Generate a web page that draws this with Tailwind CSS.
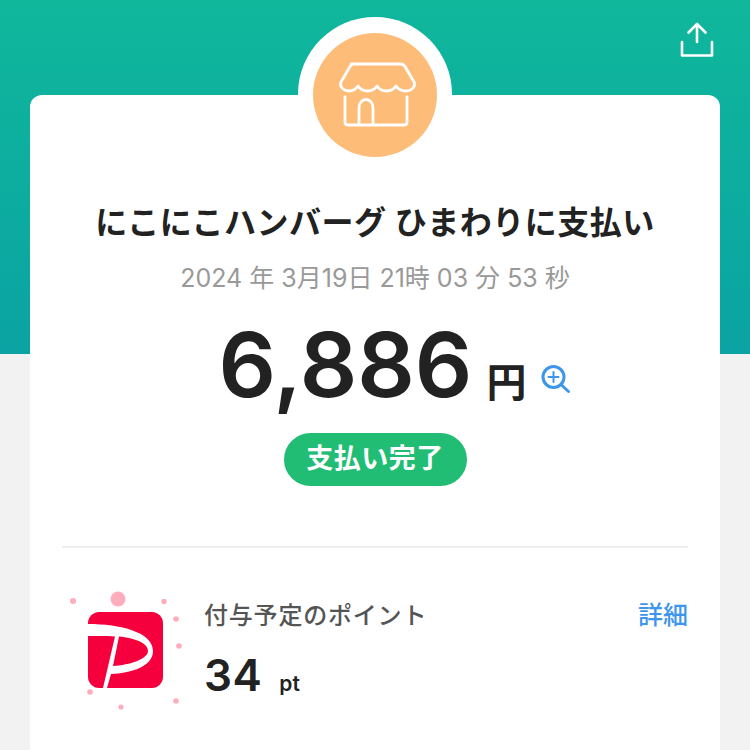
<!doctype html>
<html lang="ja"><head><meta charset="utf-8">
<script src="https://cdn.jsdelivr.net/npm/@tailwindcss/browser@4"></script>
</head>
<body class="w-[750px] h-[750px] overflow-hidden bg-[#f2f2f2] font-['Inter','Noto_Sans_CJK_JP',sans-serif]">
<div class="relative w-[750px] h-[750px] overflow-hidden">
  <div class="h-[354px] bg-gradient-to-b from-[#10b79b] to-[#0ba3a3] flex justify-end items-start pt-[20px] pr-[34px]">
    <svg class="w-[38px] h-[38px]" viewBox="678 20 38 38" fill="none" stroke="#fff" stroke-width="2.6" stroke-linecap="round" stroke-linejoin="round"><path d="M697 42V24M688.500 32.500 697 24l8.500 8.500M682 42v13.500h30V42"/></svg>
  </div>
  <div class="absolute left-[298px] top-[17px] w-[154px] h-[154px] rounded-full bg-white"></div>
  <div class="absolute left-[30px] top-[95px] w-[690px] h-[700px] bg-white rounded-[12px] flex flex-col items-center">
    <div class="absolute left-[283px] top-[-62px] w-[124px] h-[124px] rounded-full bg-[#fdbd78] flex items-center justify-center">
      <svg class="w-[92px] h-[70px]" viewBox="329 60 92 70" fill="none" stroke="#fff" stroke-width="2.800" stroke-linecap="round" stroke-linejoin="round"><path d="M351 64h50c2 0 3 1 4 2.500l9 15.500c2 5-3 9-8 9-4 0-8-2-10-5-2 3-5.500 5-9.500 5s-7.500-2-9.500-5c-2 3-5.500 5-9.500 5s-7.500-2-9.500-5c-2 3-5 5-9 5-5 0-10-4-8-9l9-15.500c1-1.500 2-2.500 4-2.500Z"/><path d="M345 97v25q0 3 3 3h56q3 0 3-3V97M359 125v-17c0-5 3-8.500 7-8.500s7 3.500 7 8.500v17"/></svg>
    </div>
    <h1 class="mt-[108px] text-[32px] leading-[40px] font-bold text-[#222] tracking-[0.5px] whitespace-nowrap">にこにこハンバーグ ひまわりに支払い</h1>
    <p class="mt-[18px] text-[25px] leading-[34px] text-[#999] whitespace-nowrap">2024 年 3月19日 21時 03 分 53 秒</p>
    <div class="mt-[24px] flex items-baseline h-[92px] ml-[40px]">
      <span class="text-[90px] leading-[92px] font-semibold text-[#222]">6,886</span>
      <span class="ml-[14px] text-[40px] font-semibold text-[#222]">円</span>
      <svg class="ml-[15px] w-[30px] h-[30px] self-center mt-[30px]" viewBox="0 0 30 30" fill="none" stroke="#3e95ec" stroke-width="3" stroke-linecap="round"><circle cx="12.500" cy="12" r="10.500"/><path d="M20.500 20l7 6.500"/><path stroke-width="2" d="M7.500 12h10M12.500 7v10"/></svg>
    </div>
    <div class="mt-[22px] w-[183px] h-[53px] rounded-full bg-[#21bd75] text-white text-[27px] font-bold flex items-center justify-center tracking-[0.5px]">支払い完了</div>
    <div class="mt-[60px] w-[626px] border-t-2 border-[#eee]"></div>
    <div class="mt-[41px] w-[626px] flex items-start">
      <svg class="w-[130px] h-[125px] shrink-0 ml-[-2px]" viewBox="60 590 130 125">
        <g fill="#ffacbc"><circle cx="118" cy="600" r="7.500"/><circle cx="73" cy="602" r="3"/><circle cx="164" cy="602.500" r="2.700"/><circle cx="176" cy="620" r="2.800"/><circle cx="179" cy="647" r="2.800"/><circle cx="90" cy="693" r="2.800"/><circle cx="121" cy="708" r="2.600"/><circle cx="176" cy="702" r="2.800"/></g>
        <path fill="#f5003c" d="M99 613h53c6 0 11 5 11 11v54c0 6-5 11-11 11H99c-6 0-11-5-11-11v-54c0-6 5-11 11-11Z"/>
        <path fill="#fff" fill-rule="evenodd" d="M88 625C120 625 153 633 153 652 153 668 130 674 111 675L107 689H103L115 637.500C105 637 95 637 88 637ZM119 637.500C135 639 148 644 148 652 148 660 130 666 113 667Z"/>
      </svg>
      <div class="ml-[14px] flex-1 min-w-0" >
        <div class="flex justify-between items-start mt-[9px]">
          <div>
            <p class="text-[24px] leading-[34px] font-medium text-[#555] tracking-[0.8px] mt-[1px]">付与予定のポイント</p>
          </div>
          <a class="text-[25px] leading-[34px] font-medium text-[#3e95ec]">詳細</a>
        </div>
        <p class="mt-[16px] flex items-baseline font-semibold text-[#222]"><span class="text-[44px] leading-[52px] tracking-[0.5px]">34</span><span class="ml-[17px] text-[21px]">pt</span></p>
      </div>
    </div>
  </div>
</div>
</body></html>
